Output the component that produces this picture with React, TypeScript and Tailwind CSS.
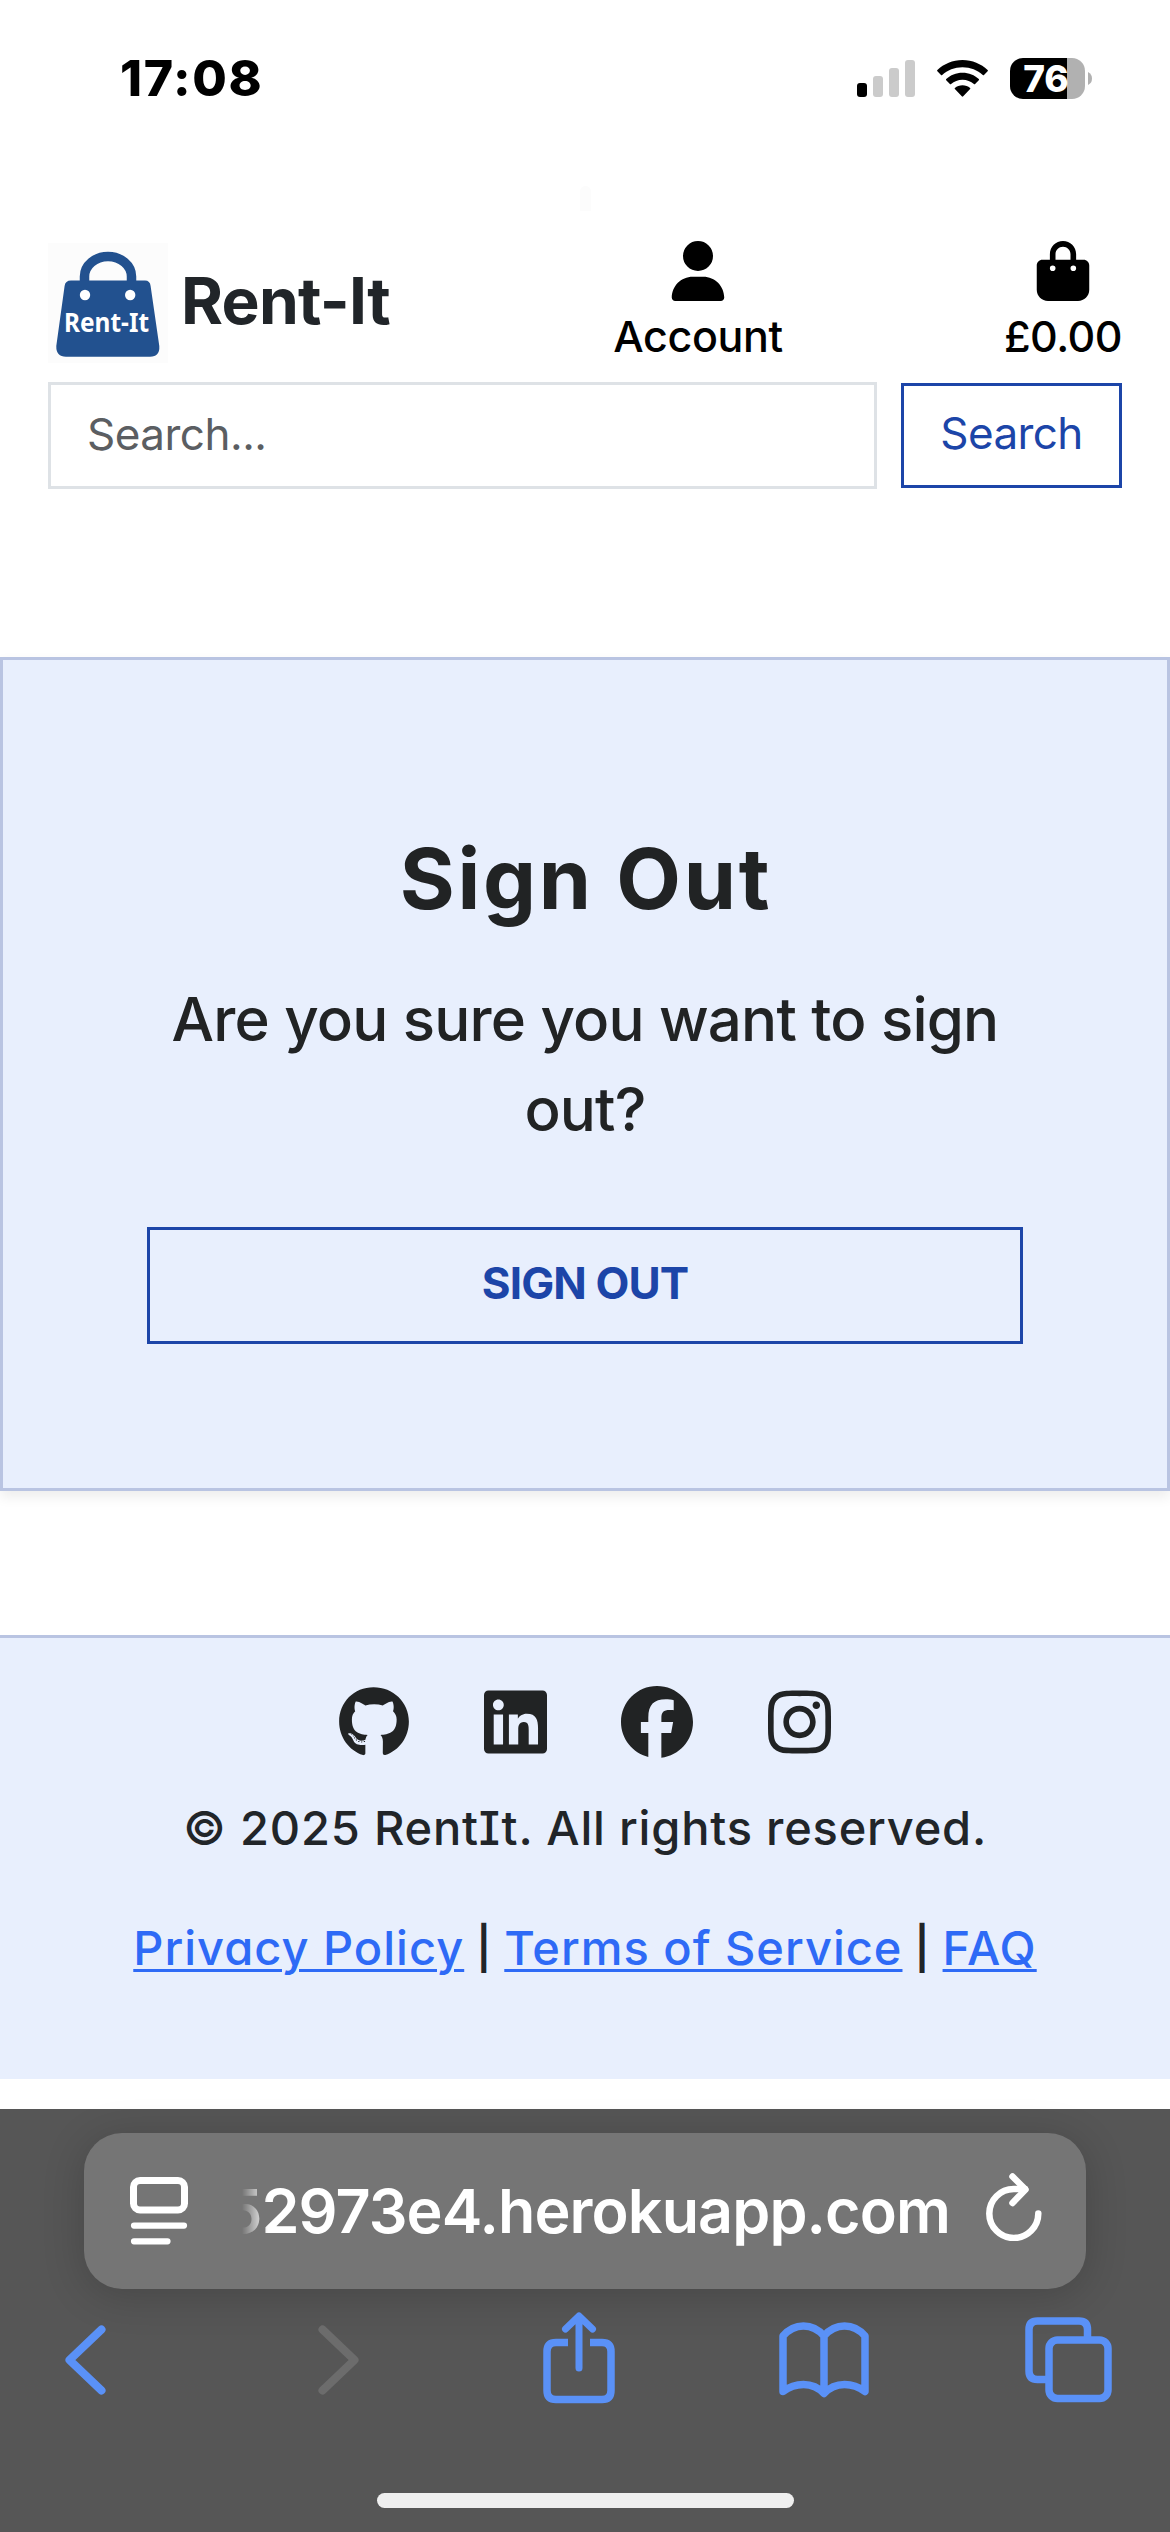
import React from "react";
import { FaUser, FaBagShopping, FaGithub, FaLinkedin, FaFacebook, FaInstagram } from "react-icons/fa6";

function SignalIcon() {
  return (
    <svg width="58" height="37" viewBox="0 0 58 37">
      <rect x="0" y="23" width="10" height="14" rx="3" fill="#000" />
      <rect x="16" y="16" width="10" height="21" rx="3" fill="#cbcbcb" />
      <rect x="32" y="8" width="10" height="29" rx="3" fill="#cbcbcb" />
      <rect x="48" y="0" width="10" height="37" rx="3" fill="#cbcbcb" />
    </svg>
  );
}

function WifiIcon() {
  return (
    <svg width="51" height="37" viewBox="0 0 51 37" fill="#000">
      <path d="M25.5 0C35.3 0 44.2 3.8 50.6 10.1Q51.2 10.7 50.6 11.3L47 15Q46.4 15.5 45.8 15C40.6 10 33.4 7.200 25.500 7.200S10.400 10 5.200 15Q4.600 15.500 4 15L.4 11.300Q-.2 10.700.4 10.100C6.800 3.800 15.700 0 25.500 0Z" />
      <path d="M25.500 12.700C31.900 12.700 37.600 15.100 41.800 19.100Q42.400 19.700 41.800 20.300L38.100 24Q37.500 24.600 36.900 24.100C33.900 21.400 29.900 19.800 25.500 19.800S17.100 21.400 14.100 24.100Q13.500 24.600 12.900 24L9.200 20.300Q8.600 19.700 9.200 19.100C13.400 15.100 19.100 12.700 25.500 12.700Z" />
      <path d="M25.500 25.200C28.400 25.200 31.100 26.200 33.100 27.900Q33.700 28.500 33.100 29.100L26.200 36.300Q25.500 37 24.800 36.300L17.900 29.100Q17.300 28.500 17.900 27.900C19.900 26.200 22.600 25.200 25.500 25.200Z" />
    </svg>
  );
}

function Battery() {
  return (
    <div className="flex items-center gap-[3px]">
      <div className="flex h-[41px] w-[75px] items-center justify-center rounded-[13px] bg-[linear-gradient(to_right,#000_57px,#b1b1b1_57px)] pr-[3px]">
        <span className="text-[37px] leading-none font-extrabold text-white">76</span>
      </div>
      <svg width="4" height="13" viewBox="0 0 4 13">
        <path d="M0 0Q4 2 4 6.500T0 13Z" fill="#b1b1b1" />
      </svg>
    </div>
  );
}

function StatusBar() {
  return (
    <div className="flex h-[156px] items-center pr-[78px] pl-[120px]">
      <span className="text-[50px] leading-none font-extrabold tracking-[1.6px] text-black">17:08</span>
      <div className="ml-auto flex items-center gap-[22px]">
        <SignalIcon />
        <WifiIcon />
        <Battery />
      </div>
    </div>
  );
}

function Logo() {
  return (
    <svg className="bg-[#fcfcfc]" width="120" height="120" viewBox="0 0 120 120">
      <path d="M36.500 40V33.500A23.500 20 0 0 1 83.500 33.500V40" fill="none" stroke="#22518f" strokeWidth="9.500" />
      <path d="M23 37.500H97Q102 37.500 102.600 43L111.300 103Q112 113.700 102 113.700H18Q8 113.700 8.300 103L16.600 43Q17.300 37.500 23 37.500Z" fill="#22518f" />
      <circle cx="37" cy="52" r="5.200" fill="#fff" />
      <circle cx="82.200" cy="52" r="5.200" fill="#fff" />
      <text x="16" y="88.500" textLength="85" lengthAdjust="spacingAndGlyphs" fontFamily="'Noto Sans'" fontWeight="700" fontSize="26" fill="#fff">Rent-It</text>
    </svg>
  );
}

function Header() {
  return (
    <header className="px-12 pt-[30px]">
      <div className="mx-auto h-[25px] w-[11px] rounded-t-full bg-[#fcfcfc]" />
      <div className="mt-[30px] flex h-[141px] items-start">
        <div className="mt-[2px] flex h-[120px] items-center gap-[13px]">
          <Logo />
          <span className="pb-1 text-[64px] leading-none font-bold tracking-[-0.7px] text-[#212529]">Rent-It</span>
        </div>
        <a className="ml-auto flex w-[170px] flex-col items-center text-black">
          <FaUser size={60} />
          <span className="mt-[3px] text-[43px] leading-[65px] font-[450] tracking-[-0.4px] whitespace-nowrap">Account</span>
        </a>
        <a className="ml-[221px] flex w-[118px] flex-col items-center text-black">
          <FaBagShopping size={60} />
          <span className="mt-[3px] text-[43px] leading-[65px] font-[450] tracking-[-0.5px] whitespace-nowrap">£0.00</span>
        </a>
      </div>
      <form className="flex items-center gap-6">
        <div className="flex h-[107px] w-[829px] items-center border-[3px] border-[#dee2e6] pb-1 pl-9 text-[44px] tracking-[-0.5px] text-[#5b5e62]">
          Search...
        </div>
        <button type="button" className="h-[105px] w-[221px] border-[3px] border-[#1c45a8] pb-[5px] text-[44px] tracking-[-0.600px] text-[#1c45a8]">
          Search
        </button>
      </form>
    </header>
  );
}

function SignOutCard() {
  return (
    <main className="mt-[168px] flex h-[834px] flex-col items-center border-[3px] border-[#b9c4e2] bg-[#e8effd] px-36 pt-[169px] text-[#212324] shadow-[0_6px_12px_rgba(0,0,0,0.075)]">
      <h1 className="pl-[2px] text-[84px] leading-[100px] font-bold tracking-[2.700px] whitespace-nowrap [font-feature-settings:'cv11','cv08']">Sign Out</h1>
      <p className="mt-[45px] text-center text-[60px] leading-[90px] font-[450] tracking-[-0.800px]">
        <span className="whitespace-nowrap">Are you sure you want to sign</span>
        <br />
        out?
      </p>
      <button type="button" className="mt-[73px] h-[117px] w-full border-[3px] border-[#1c45a8] pb-[5px] text-[44px] font-bold tracking-[-0.900px] text-[#1c45a8]">
        SIGN OUT
      </button>
    </main>
  );
}

function Footer() {
  return (
    <footer className="mt-36 h-[444px] border-t-[3px] border-[#b9c4e2] bg-[#e8effd] pt-12 text-[47px] font-medium text-[#212529] [font-feature-settings:'cv11','cv08']">
      <div className="flex justify-center gap-[74.500px] text-[#212324]">
        <FaGithub className="h-[72px] w-[70px]" />
        <FaLinkedin className="h-[72px] w-[63px]" />
        <FaFacebook className="h-[72px] w-[72px]" />
        <FaInstagram className="h-[72px] w-[63px]" />
      </div>
      <p className="mt-[34px] text-center leading-[72px] tracking-[0.800px] whitespace-nowrap">© 2025 RentIt. All rights reserved.</p>
      <p className="mt-12 flex justify-center gap-[12px] leading-[72px] tracking-[1px] whitespace-nowrap">
        <a className="text-[#2e6af6] underline decoration-[3px] underline-offset-[4px]">Privacy Policy</a>
        <span className="text-[42px] font-semibold">|</span>
        <a className="text-[#2e6af6] underline decoration-[3px] underline-offset-[4px]">Terms of Service</a>
        <span className="text-[42px] font-semibold">|</span>
        <a className="text-[#2e6af6] underline decoration-[3px] underline-offset-[4px]">FAQ</a>
      </p>
    </footer>
  );
}

function AddressBar() {
  return (
    <div className="mx-[84px] flex h-[156px] items-center rounded-[38px] bg-[#757575] pr-11 pl-[46px] text-white shadow-[0_6px_42px_rgba(0,0,0,0.18)]">
      <svg width="58" height="68" viewBox="0 0 58 68" fill="none" stroke="#fff" strokeWidth="7" strokeLinecap="round">
        <rect x="3.500" y="3.500" width="51" height="29.500" rx="6.500" />
        <path d="M4 48.600H54M4 64.300H37.500" strokeWidth="6.200" />
      </svg>
      <div className="ml-[54px] flex w-[708px] justify-end overflow-hidden [mask-image:linear-gradient(to_right,transparent,#000_26px)]">
        <span className="text-[61px] leading-[90px] font-semibold tracking-[-0.900px] whitespace-nowrap">52973e4.herokuapp.com</span>
      </div>
      <svg className="mb-2 ml-auto" width="56" height="68" viewBox="0 0 56 68" fill="none" stroke="#fff" strokeWidth="6.500" strokeLinecap="round" strokeLinejoin="round">
        <path d="M52.300 40.500A24.500 24.500 0 1 1 27.800 16H39" />
        <path d="M26.500 3.500L39.500 16.500L26.500 30" />
      </svg>
    </div>
  );
}

function BrowserChrome() {
  return (
    <div className="mt-[30px] flex h-[423px] flex-col bg-[#565656] pt-6">
      <AddressBar />
      <div className="mt-[23px] flex items-start pl-[65px] text-[#5a91f7]">
        <svg className="mt-[13px]" width="41" height="70" viewBox="0 0 41 70" fill="none" stroke="currentColor" strokeWidth="8" strokeLinecap="round" strokeLinejoin="round">
          <path d="M36.500 4.500L4.500 35L36.500 65.500" />
        </svg>
        <svg className="mt-[13px] ml-[212px]" width="41" height="70" viewBox="0 0 41 70" fill="none" stroke="#6c6c6c" strokeWidth="8" strokeLinecap="round" strokeLinejoin="round">
          <path d="M4.500 4.500L36.500 35L4.500 65.500" />
        </svg>
        <svg className="ml-[184px]" width="72" height="92" viewBox="0 0 72 92" fill="none" stroke="currentColor" strokeWidth="7.500" strokeLinecap="round" strokeLinejoin="round">
          <path d="M25 30.500H13Q4 30.500 4 39.500V78.500Q4 87.500 13 87.500H59Q68 87.500 68 78.500V39.500Q68 30.500 59 30.500H47" strokeLinecap="butt" />
          <path d="M36 56V4.500M22.500 17L36 4L49.500 17" strokeWidth="7" />
        </svg>
        <svg className="mt-[10px] ml-[164px]" width="90" height="76" viewBox="0 0 90 76" fill="none" stroke="currentColor" strokeWidth="7.500" strokeLinecap="round" strokeLinejoin="round">
          <path d="M45 14C39 7 32 4 24.500 4S10 7 4 14V69.500C10 65 17 62.500 24.500 62.500S39 65 45 71.500C51 65 58 62.500 65.500 62.500S80 65 86 69.500V14C80 7 73 4 65.500 4S51 7 45 14ZM45 14V71" />
        </svg>
        <svg className="mt-[5px] ml-[156px]" width="87" height="86" viewBox="0 0 87 86" fill="none" stroke="currentColor" strokeWidth="7.500">
          <path d="M22 62.500H12.500Q4 62.500 4 54V12.500Q4 4 12.500 4H54Q62.500 4 62.500 12.500V21" />
          <rect x="24" y="23" width="59" height="58.500" rx="8.500" />
        </svg>
      </div>
      <div className="mt-auto mb-6 h-[15px] w-[417px] self-center rounded-full bg-[#efefef]" />
    </div>
  );
}

export default function App() {
  return (
    <div className="h-[2532px] w-[1170px] overflow-hidden bg-white font-['Inter',sans-serif]">
      <StatusBar />
      <Header />
      <SignOutCard />
      <Footer />
      <BrowserChrome />
    </div>
  );
}
